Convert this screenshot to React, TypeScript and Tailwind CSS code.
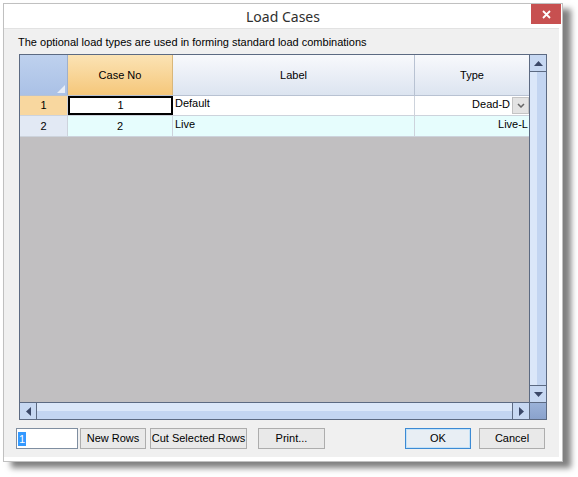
import React from 'react';

const ui = "font-['Liberation_Sans',Arial,sans-serif] text-[11px] text-black";

const TriUp = () => (
  <svg width="9" height="5" viewBox="0 0 9 5"><path d="M0 5 L4.5 0 L9 5 Z" fill="#3b4868" /></svg>
);
const TriDown = () => (
  <svg width="9" height="5" viewBox="0 0 9 5"><path d="M0 0 L4.5 5 L9 0 Z" fill="#3b4868" /></svg>
);
const TriLeft = () => (
  <svg width="5" height="9" viewBox="0 0 5 9"><path d="M5 0 L0 4.5 L5 9 Z" fill="#3b4868" /></svg>
);
const TriRight = () => (
  <svg width="5" height="9" viewBox="0 0 5 9"><path d="M0 0 L5 4.5 L0 9 Z" fill="#3b4868" /></svg>
);

const Button = ({ label, w, primary }: { label: string; w: string; primary?: boolean }) => (
  <button
    className={`${w} h-[21px] px-0 flex items-center justify-center whitespace-nowrap border ${
      primary ? 'border-[#3c8ad4] bg-[#e8eef4] shadow-[inset_0_0_0_1px_#c4e2f8]' : 'border-[#adadad] bg-[#e9e9e9]'
    } text-[11px] leading-none`}
  >
    {label}
  </button>
);

export default function App() {
  return (
    <div className={`w-[578px] h-[477px] bg-white overflow-hidden pt-[3px] pl-[3px] ${ui}`}>
      {/* window */}
      <div className="w-[560px] h-[459px] flex flex-col bg-white border border-[#c0c0c0] shadow-[8px_6px_6px_rgba(0,0,0,0.5)]">
        {/* title bar */}
        <div className="relative h-[24px] flex items-center justify-center">
          <span className="font-['Noto_Sans','Open_Sans',sans-serif] text-[14px] text-[#2f2f2f] pt-[1px]">Load Cases</span>
          <div className="absolute right-[1px] top-0 w-[30px] h-[20px] bg-[#c75050] flex items-center justify-center">
            <svg width="9" height="9" viewBox="0 0 9 9">
              <path d="M1 1 L8 8 M8 1 L1 8" stroke="#fff" strokeWidth="1.8" />
            </svg>
          </div>
        </div>

        {/* client area */}
        <div className="flex-1 flex flex-col bg-[#f0f0f0] border-t border-[#e2e2e2] mr-[3px] mb-[4px]">
          <div className="pl-[14px] pt-[6px] h-[20px] leading-[14px]">
            The optional load types are used in forming standard load combinations
          </div>

          {/* grid */}
          <div className="ml-[15px] mt-[5px] w-[528px] h-[366px] border border-[#5c6a82] flex">
            <div className="w-[509px] flex flex-col">
              <div className="flex-1 flex flex-col bg-[#c1bfc1]">
                {/* header */}
                <div className="flex h-[41px] border-b border-[#b8c2d2]">
                  <div className="relative w-[48px] bg-gradient-to-b from-[#bed1ee] to-[#aac1e6] border-r border-[#9fb0cc]">
                    <div className="absolute right-[2px] bottom-[2px] w-0 h-0 border-l-[8px] border-l-transparent border-b-[8px] border-b-[#e8eef8]" />
                  </div>
                  <div className="w-[105px] flex items-center justify-center bg-gradient-to-b from-[#fbe3b4] to-[#f5c77a] border-r border-[#d9b77a]">
                    Case No
                  </div>
                  <div className="w-[242px] flex items-center justify-center bg-gradient-to-b from-[#f8f9fc] to-[#dce4f0] border-r border-[#b8c2d2]">
                    Label
                  </div>
                  <div className="w-[114px] flex items-center justify-center bg-gradient-to-b from-[#f8f9fc] to-[#dce4f0]">
                    Type
                  </div>
                </div>

                {/* row 1 */}
                <div className="flex h-[20px] border-b border-[#cdd3dc]">
                  <div className="w-[48px] flex items-center justify-center bg-[#f8d79f] border-r border-[#cdd3dc]">1</div>
                  <div className="w-[105px] flex items-center justify-center bg-white border-2 border-black">1</div>
                  <div className="w-[242px] bg-white border-r border-[#cdd3dc] pl-[2px] leading-[14px]">Default</div>
                  <div className="w-[114px] bg-white flex items-start justify-end pt-[1px]">
                    <span className="leading-[14px]">Dead-D</span>
                    <div className="ml-[2px] w-[17px] h-[17px] bg-[#e3e3e3] border border-[#c4c4c4] flex items-center justify-center">
                      <svg width="8" height="5" viewBox="0 0 8 5">
                        <path d="M1 1 L4 4 L7 1" stroke="#666" strokeWidth="1.5" fill="none" />
                      </svg>
                    </div>
                  </div>
                </div>

                {/* row 2 */}
                <div className="flex h-[21px] border-b border-[#cdd3dc]">
                  <div className="w-[48px] flex items-center justify-center bg-[#e2e9f4] border-r border-[#cdd3dc]">2</div>
                  <div className="w-[105px] flex items-center justify-center bg-[#e6fdfd] border-r border-[#cdd3dc]">2</div>
                  <div className="w-[242px] bg-[#e6fdfd] border-r border-[#cdd3dc] pl-[2px] pt-[1px] leading-[14px]">Live</div>
                  <div className="w-[114px] bg-[#e6fdfd] flex justify-end pt-[1px] leading-[14px] pr-[1px]">Live-L</div>
                </div>
              </div>

              {/* horizontal scrollbar */}
              <div className="h-[17px] flex border-t border-[#5c6a82]">
                <div className="w-[17px] flex items-center justify-center bg-[#c7d8f2] border-r border-[#5c6a82]">
                  <TriLeft />
                </div>
                <div className="flex-1 flex flex-col">
                  <div className="h-[8px] bg-[#dbe7f9]" />
                  <div className="flex-1 bg-[#c3d5f1]" />
                </div>
                <div className="w-[17px] flex items-center justify-center bg-[#c7d8f2] border-l border-[#5c6a82]">
                  <TriRight />
                </div>
              </div>
            </div>

            {/* vertical scrollbar */}
            <div className="w-[17px] flex flex-col border-l border-[#5c6a82]">
              <div className="h-[17px] flex items-center justify-center bg-[#c7d8f2] border-b border-[#5c6a82]">
                <TriUp />
              </div>
              <div className="flex-1 flex">
                <div className="w-[7px] bg-[#dbe7f9]" />
                <div className="flex-1 bg-[#c3d5f1]" />
              </div>
              <div className="h-[17px] flex items-center justify-center bg-[#c7d8f2] border-t border-[#5c6a82]">
                <TriDown />
              </div>
              <div className="h-[17px] bg-gradient-to-b from-[#9bb2d8] to-[#8aa2cc] border-t border-[#5c6a82]" />
            </div>
          </div>

          {/* bottom controls */}
          <div className="flex items-center mt-[8px] ml-[12px]">
            <div className="w-[62px] h-[21px] bg-white border border-[#7f8ea0] flex items-center pl-[1px]">
              <span className="bg-[#3399ff] text-white leading-[14px] px-[1px]">1</span>
            </div>
            <div className="ml-[2px]"><Button label="New Rows" w="w-[66px]" /></div>
            <div className="ml-[4px]"><Button label="Cut Selected Rows" w="w-[97px]" /></div>
            <div className="ml-[11px]"><Button label="Print..." w="w-[67px]" /></div>
            <div className="ml-[80px]"><Button label="OK" w="w-[66px]" primary /></div>
            <div className="ml-[8px]"><Button label="Cancel" w="w-[66px]" /></div>
          </div>
        </div>
      </div>
    </div>
  );
}
